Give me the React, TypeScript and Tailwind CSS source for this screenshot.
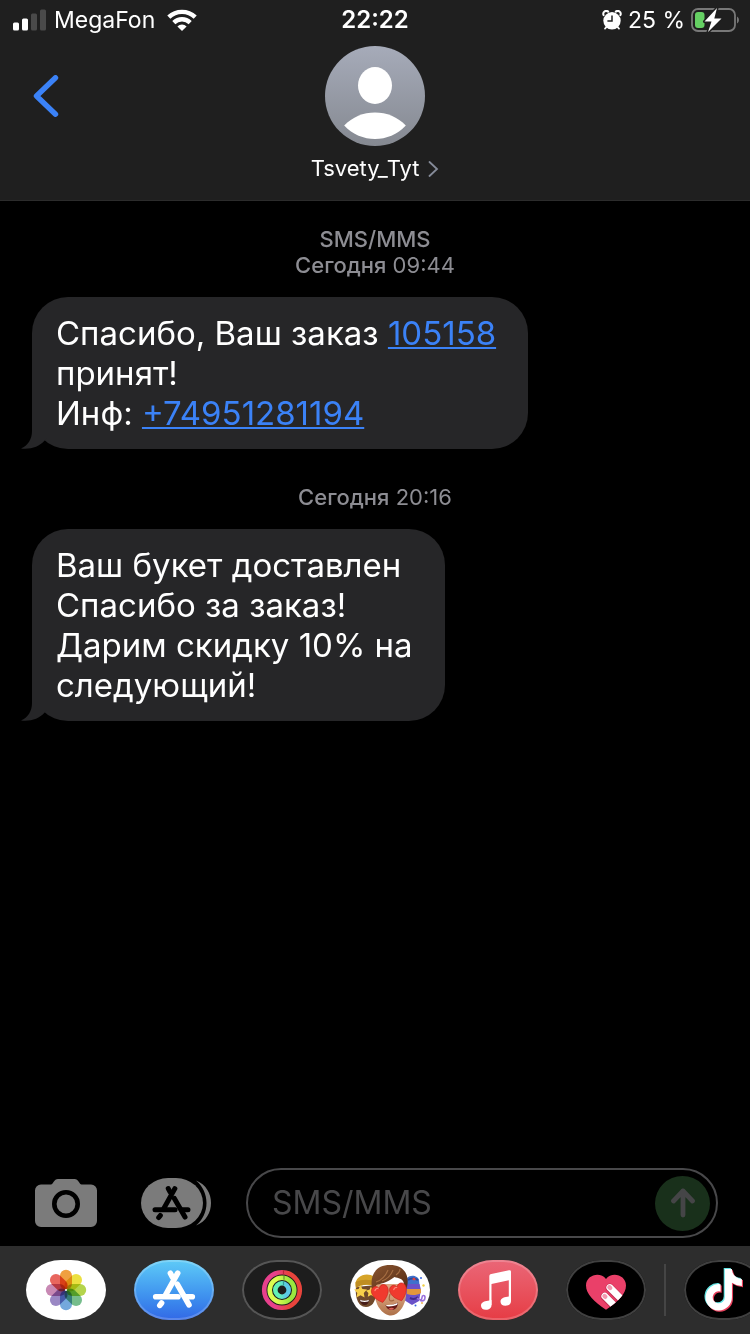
import React from 'react';

interface Message {
  id: number;
  service?: string;
  day: string;
  time: string;
  lines: React.ReactNode[];
}

const messages: Message[] = [
  {
    id: 1,
    service: 'SMS/MMS',
    day: 'Сегодня',
    time: '09:44',
    lines: [
      <>
        Спасибо, Ваш заказ <TextLink href="#order">105158</TextLink>
      </>,
      'принят!',
      <>
        Инф: <TextLink href="tel:+74951281194">+74951281194</TextLink>
      </>,
    ],
  },
  {
    id: 2,
    day: 'Сегодня',
    time: '20:16',
    lines: ['Ваш букет доставлен', 'Спасибо за заказ!', 'Дарим скидку 10% на', 'следующий!'],
  },
];

function TextLink({ href, children }: { href: string; children: React.ReactNode }) {
  return (
    <a href={href} className="text-[#3b82f7] underline decoration-2 underline-offset-2">
      {children}
    </a>
  );
}

function StatusBar() {
  return (
    <div className="grid h-10 grid-cols-3 items-center px-3 text-[23px] leading-7">
      <div className="flex items-center gap-2">
        <svg width="34" height="22" viewBox="0 0 34 22" className="shrink-0">
          <rect x="1" y="13.5" width="6" height="8" rx="1.5" fill="#fff" />
          <rect x="10" y="9.5" width="6" height="12" rx="1.5" fill="#fff" />
          <rect x="19" y="4.5" width="6" height="17" rx="1.5" fill="#4a4a4a" />
          <rect x="28" y="0.5" width="6" height="21" rx="1.5" fill="#4a4a4a" />
        </svg>
        <span>MegaFon</span>
        <svg width="30" height="22" viewBox="0 0 30 22" fill="none" stroke="#fff" strokeWidth="4.4" className="ml-1 shrink-0">
          <path d="M1.8 8.2a19 19 0 0 1 26.4 0" />
          <path d="M6.8 13.6a11.8 11.8 0 0 1 16.4 0" />
          <path d="M15 22l-4.6-4.6a6.6 6.6 0 0 1 9.2 0z" fill="#fff" stroke="none" />
        </svg>
      </div>
      <div className="text-center text-2xl leading-7 font-semibold">22:22</div>
      <div className="flex items-center justify-end gap-1.5">
        <svg width="20" height="20" viewBox="0 0 20 20" className="shrink-0">
          <path d="M1.6 5.2A3 3 0 0 1 6.2 1.6M18.4 5.2a3 3 0 0 0-4.6-3.6" fill="none" stroke="#fff" strokeWidth="2" strokeLinecap="round" />
          <path d="M4.5 17l-1.5 1.6M15.5 17l1.5 1.6" stroke="#fff" strokeWidth="1.8" strokeLinecap="round" />
          <circle cx="10" cy="10.8" r="8.7" fill="#fff" />
          <path d="M10 5.4v5.6H5.4" fill="none" stroke="#1f1f1f" strokeWidth="1.5" />
        </svg>
        <span className="whitespace-nowrap">25 %</span>
        <svg width="48" height="24" viewBox="0 0 48 24" className="-mr-px shrink-0">
          <rect x="1" y="1" width="43" height="22" rx="6" fill="none" stroke="#787878" strokeWidth="1.8" />
          <path d="M46 8.5c2.6 1.6 2.6 5.4 0 7z" fill="#787878" />
          <rect x="4" y="4" width="9.5" height="16" rx="3" fill="#65cf63" />
          <path
            d="M26 0L13.5 13.6h7L17 24l13.5-13.6h-7.2z"
            fill="#fff"
            stroke="#1f1f1f"
            strokeWidth="3"
            paintOrder="stroke"
            strokeLinejoin="round"
          />
        </svg>
      </div>
    </div>
  );
}

function Header() {
  return (
    <header className="border-b border-[#2c2c2c] bg-[#1f1f1f]">
      <StatusBar />
      <div className="grid grid-cols-3 items-start pt-1.5 pb-[18px]">
        <button aria-label="Назад" className="flex h-[100px] w-20 items-center pl-8">
          <svg width="28" height="42" viewBox="0 0 28 42" className="shrink-0">
            <path d="M23.5 2.8L4.5 21l19 18.2" fill="none" stroke="#3b82f7" strokeWidth="5.4" strokeLinecap="round" strokeLinejoin="round" />
          </svg>
        </button>
        <button className="flex flex-col items-center gap-2">
          <svg width="100" height="100" viewBox="0 0 100 100">
            <defs>
              <linearGradient id="avatar" x1="0" y1="0" x2="0" y2="1">
                <stop offset="0" stopColor="#a6abb9" />
                <stop offset="1" stopColor="#858991" />
              </linearGradient>
            </defs>
            <circle cx="50" cy="50" r="50" fill="url(#avatar)" />
            <ellipse cx="50" cy="39.5" rx="17" ry="18.5" fill="#fff" />
            <path d="M19.2 79.5C35 62 65 62 80.8 79.5C64 97.5 36 97.5 19.2 79.5z" fill="#fff" />
          </svg>
          <span className="flex items-center gap-2 text-[22px] leading-7">
            Tsvety_Tyt
            <svg width="12" height="18" viewBox="0 0 12 18" className="shrink-0">
              <path d="M2.5 3l7.5 7L2.5 17" fill="none" stroke="#858b99" strokeWidth="1.8" strokeLinecap="round" />
            </svg>
          </span>
        </button>
      </div>
    </header>
  );
}

function MessageGroup({ message }: { message: Message }) {
  return (
    <section>
      <div className="mb-[19px] text-center text-[22px] leading-[26px] text-[#8d8d93]">
        {message.service && <p className="font-medium">{message.service}</p>}
        <p>
          <span className="font-medium">{message.day}</span> {message.time}
        </p>
      </div>
      <div className="relative ml-8 w-fit rounded-[36px] bg-[#262628] py-4 pr-8 pl-6 text-[33px] leading-10">
        <svg width="26" height="36" viewBox="0 0 26 36" className="absolute bottom-0 -left-[11px]">
          <path d="M11 0V18C11 26 7 32.5 0 35.6C10 36.6 18 34 23.7 27.6L26 25V0z" fill="#262628" />
        </svg>
        {message.lines.map((line, i) => (
          <p key={i} className="relative">
            {line}
          </p>
        ))}
      </div>
    </section>
  );
}

/* Three crossing sticks of the App Store mark, centred on 0,0 */
function StoreGlyph({ color }: { color: string }) {
  return (
    <g fill="none" stroke={color} strokeWidth="5.6" strokeLinecap="round" strokeLinejoin="round">
      <path d="M3.7-16L-8.5 6" />
      <path d="M-18.3 7.5H4" />
      <path d="M-3.6-16L-1.5-12" />
      <path d="M3.2-5L15 15.6" />
      <path d="M12 7.5h6.3" />
      <path d="M-12.4 13.8l-1.8 2.4" />
    </g>
  );
}

function Composer() {
  return (
    <form className="flex items-center pr-8 pb-2 pl-[35px]" onSubmit={(e) => e.preventDefault()}>
      <button type="button" aria-label="Камера" className="shrink-0">
        <svg width="62" height="48" viewBox="0 0 62 48">
          <path
            d="M6 5.5h10c2 0 3-5.5 7-5.5h16.5c4 0 5 5.5 7 5.5H56a6 6 0 0 1 6 6V42a6 6 0 0 1-6 6H6a6 6 0 0 1-6-6V11.5a6 6 0 0 1 6-6z"
            fill="#7b7b7b"
          />
          <circle cx="31" cy="25" r="11.7" fill="none" stroke="#000" strokeWidth="4.6" />
        </svg>
      </button>
      <button type="button" aria-label="Приложения" className="ml-11 shrink-0">
        <svg width="70" height="50" viewBox="0 0 70 50">
          <path d="M55 2.5C75 10 75 40 55 47.5C69 36 69 14 55 2.5z" fill="#7b7b7b" />
          <rect width="62" height="50" rx="27" ry="25" fill="#7b7b7b" />
          <g transform="translate(30.5 25) scale(0.9)">
            <StoreGlyph color="#000" />
          </g>
        </svg>
      </button>
      <div className="ml-[35px] flex h-[70px] min-w-0 flex-1 items-center rounded-full border-2 border-[#48484a] pr-1.5 pl-6">
        <input
          type="text"
          aria-label="Сообщение"
          placeholder="SMS/MMS"
          className="min-w-0 flex-1 bg-transparent text-[32px] leading-10 text-white outline-none placeholder:text-[#48484a]"
        />
        <button type="submit" aria-label="Отправить" className="flex size-[55px] shrink-0 items-center justify-center rounded-full bg-[#19301b]">
          <svg width="26" height="30" viewBox="0 0 26 30">
            <path d="M13 3v24M3.5 13L13 3l9.5 10" fill="none" stroke="#454547" strokeWidth="4.8" strokeLinecap="round" strokeLinejoin="round" />
          </svg>
        </button>
      </div>
    </form>
  );
}

const petals = ['#f0a040', '#ece040', '#b4d44c', '#76bd8c', '#74a8dc', '#9a88c4', '#c889b4', '#e8665e'];

function PhotosIcon() {
  return (
    <g className="isolate">
      {petals.map((color, i) => (
        <rect
          key={color}
          x="34"
          y="9.8"
          width="12"
          height="20"
          rx="6"
          fill={color}
          transform={`rotate(${i * 45} 40 30)`}
          className="mix-blend-multiply"
        />
      ))}
      <circle cx="40" cy="30" r="1" fill="#fff" />
    </g>
  );
}

function ActivityIcon() {
  return (
    <g fill="none" strokeWidth="4.6">
      <defs>
        <linearGradient id="move">
          <stop offset="0.3" stopColor="#e8408c" />
          <stop offset="0.7" stopColor="#e8443c" />
        </linearGradient>
        <linearGradient id="exercise">
          <stop offset="0.3" stopColor="#dcfb50" />
          <stop offset="0.8" stopColor="#9be83f" />
        </linearGradient>
        <linearGradient id="stand">
          <stop offset="0.3" stopColor="#62f0b8" />
          <stop offset="0.8" stopColor="#5cc8e6" />
        </linearGradient>
      </defs>
      <circle cx="40" cy="30" r="17.8" stroke="url(#move)" />
      <circle cx="40" cy="30" r="12.3" stroke="url(#exercise)" />
      <circle cx="40" cy="30" r="6.7" stroke="url(#stand)" />
      <path d="M41.5 10.2v4.3" stroke="#b8243c" strokeWidth="1.2" />
      <path d="M42 15.7v4" stroke="#6fa030" strokeWidth="1.4" />
      <path d="M41.5 21.3v4" stroke="#2f9f90" strokeWidth="1.2" />
    </g>
  );
}

function Heart({ x, y, angle }: { x: number; y: number; angle: number }) {
  return (
    <path
      d="M0 8C-9 2-9-6-4-7C-1.5-7.5 0-5 0-4C0-5 1.5-7.5 4-7C9-6 9 2 0 8z"
      transform={`translate(${x} ${y}) rotate(${angle}) scale(1.15)`}
      fill="#f03a2e"
      stroke="#c4231c"
      strokeWidth="0.5"
    />
  );
}

function MemojiIcon() {
  return (
    <g>
      <defs>
        <linearGradient id="skin" x1="0" y1="0" x2="0" y2="1">
          <stop offset="0.3" stopColor="#dba680" />
          <stop offset="1" stopColor="#ad7048" />
        </linearGradient>
        <linearGradient id="hair" x1="0" y1="0" x2="1" y2="1">
          <stop offset="0" stopColor="#8a5530" />
          <stop offset="1" stopColor="#532b14" />
        </linearGradient>
      </defs>
      {/* left face in a yellow beanie */}
      <path d="M6 27c-1 8 1 20 10 20 6 0 9-5 10-12V25z" fill="#70492b" />
      <path d="M5.5 26C4 12 27 10 27 24l-1 3C20 24 12 24 6 28z" fill="#d6a429" />
      <path d="M5.5 22C12 19 20 19 27 22v3.5C20 24 12 24 6 28z" fill="#bf8d22" />
      <path d="M9.5 39.5c4 2 7.5 1.5 10 0-.5 3.5-2.5 5.5-4.5 5.5-2.5 0-5-2-5.5-5.5z" fill="#451c18" />
      <path d="M10 39.8c3 1.3 6.5 1.2 9 0l-.7 1.6c-2.6.7-5 .6-7.6 0z" fill="#fff" />
      <path d="M10.5 25l1.9 4 4.6.6-3.2 3.3.8 4.6-4.1-2.2-4 2.2.8-4.6-3.2-3.3 4.5-.6z" fill="#f8cf4a" />
      <path d="M21 26.500l1.500 3.300 3.700.6-2.600 2.600.7 3.700-3.300-1.800-3.200 1.800.6-3.700-2.500-2.600 3.600-.6z" fill="#f8cf4a" />
      {/* right face in a party hat */}
      <path d="M57 18c4-4 11-2 12 2l1 10H57z" fill="#3f70cc" />
      <path d="M58 20c3-2 7-1.5 10 0" fill="none" stroke="#27499c" strokeWidth="2" />
      <path d="M62 19l2-1.5 2 1.8-2 1.2z" fill="#e8413a" />
      <path d="M55 24h14.5l1.5 6-2 11-7 4-8-5z" fill="#6a51c8" />
      <path d="M57 29h14v4c-4 2.5-10 2.5-14 1z" fill="#e2963a" />
      <path d="M60 38c3 1.5 6 1 8-1" fill="none" stroke="#41298c" strokeWidth="2" />
      <path d="M67 38c3 3 5 2 5-.5s3-3 3 0-2 4-5 3" fill="none" stroke="#9a70dc" strokeWidth="1.6" />
      <circle cx="71" cy="18" r="1" fill="#3565e4" />
      <circle cx="73.5" cy="25.5" r="1.2" fill="#efcf44" />
      <circle cx="65.5" cy="45.5" r="1" fill="#3565e4" />
      <circle cx="72" cy="43" r=".9" fill="#efaf44" />
      {/* front face with heart eyes */}
      <path d="M25 24c-2 10 1 20 5 25 3 4 7 6.500 11 6.500s8-3 11-7.500c4-6 5-15 4-24z" fill="url(#skin)" />
      <path d="M22.5 31C19 16 25 5 40 5c13 0 20 9 17 22l-1.5 4-2-9c-1-3-5-4-9-5-8 6-15 7-18 8z" fill="url(#hair)" />
      <path d="M26 22c6-2 10-7 12-12M32 21c6-2 9-6 11-11M46 15c3-2 4-4 4-6" fill="none" stroke="#a56d42" strokeWidth="1.1" />
      <path d="M40 34c-1 4-1.5 5.500 0 6.500 1.500.8 3 .4 4-.5" fill="none" stroke="#a46640" strokeWidth="1.2" />
      <path d="M35.5 45c4.5.3 9-.6 12.500-2.500 0 4.500-2.500 7.500-6.500 7.500-3 0-5-1.500-6-5z" fill="#651c18" />
      <path d="M36 45c4.500.3 8.500-.6 11.700-2.200l-.6 2c-3 1.400-7 1.800-10.400 1.500z" fill="#fff" />
      <path d="M38.5 48.800c1.800-1.200 4.200-1.200 5.500-.4-1.200 1.700-4 2-5.500.4z" fill="#dd6258" />
      <Heart x={30.5} y={33.5} angle={-14} />
      <Heart x={48.8} y={32} angle={-18} />
      <path d="M25 30.5c.5-1.800 2-2.300 3-2M43.800 29.500c.5-1.800 2-2.300 3-2" fill="none" stroke="#ff8a7c" strokeWidth="1.3" strokeLinecap="round" />
    </g>
  );
}

function MusicIcon() {
  return (
    <g fill="#fff">
      <path d="M31.3 16.5c0-1.5.7-2.2 2-2.5L51 10.3c1.3-.3 2 .2 2 1.5V41h-2.200V20.200L33.500 24v21h-2.200z" />
      <path d="M33.5 40v5.3c0 2.700-2.200 4.500-5.600 4.500-3 0-4.900-1.800-4.900-4.100 0-4 4.600-4.700 8.300-5.200z" />
      <path d="M53 36v5.300c0 2.700-2.200 4.500-5.600 4.500-3 0-4.900-1.800-4.900-4.100 0-4 4.600-4.700 8.300-5.200z" />
    </g>
  );
}

function TouchIcon() {
  const heart = 'M40 49.8C28 41.5 20 34 20 25.5C20 15 34 11 40 19C46 11 60 15 60 25.5C60 34 52 41.5 40 49.8z';
  return (
    <g>
      <clipPath id="touch-heart">
        <path d={heart} />
      </clipPath>
      <path d={heart} fill="#ea4069" />
      <g clipPath="url(#touch-heart)" strokeLinecap="round">
        <path d="M43.8 27.8L59 43M38.8 36.5L54 51.7" stroke="#c22c50" strokeWidth="8.2" />
        <path d="M43.8 27.5L59 42.7M38.8 36.2L54 51.4" stroke="#fff" strokeWidth="6.8" />
        <path d="M43.4 27.2l.8.8M38.5 36l.8.8" stroke="#f29ab0" strokeWidth="4.4" />
      </g>
    </g>
  );
}

function TikTokIcon() {
  const note =
    'M448,209.91a210.06,210.06,0,0,1-122.77-39.25V349.38A162.55,162.55,0,1,1,185,188.31V278.2a74.62,74.62,0,1,0,52.23,71.18V0l88,0a121.18,121.18,0,0,0,1.86,22.17h0A122.18,122.18,0,0,0,381,102.39a121.43,121.43,0,0,0,67,20.14Z';
  return (
    <g>
      <path d={note} fill="#64e4e4" transform="translate(20.5 8) scale(0.081)" />
      <path d={note} fill="#e8405c" transform="translate(22.7 10.2) scale(0.081)" />
      <path d={note} fill="#fff" transform="translate(21.6 9) scale(0.081)" />
    </g>
  );
}

const apps = [
  { name: 'Фото', style: 'bg-white', icon: <PhotosIcon /> },
  {
    name: 'App Store',
    style: 'bg-linear-to-b from-[#5fcbf7] to-[#3268e6] inset-ring-2 inset-ring-white/20',
    icon: (
      <g transform="translate(40 29.2)">
        <StoreGlyph color="#fff" />
      </g>
    ),
  },
  { name: 'Активность', style: 'bg-[#1d1d1d] inset-ring-2 inset-ring-[#555555]', icon: <ActivityIcon /> },
  { name: 'Memoji', style: 'bg-white', icon: <MemojiIcon /> },
  { name: 'Музыка', style: 'bg-linear-to-b from-[#ea6677] to-[#e63b44] inset-ring-2 inset-ring-white/20', icon: <MusicIcon /> },
  { name: 'Digital Touch', style: 'bg-black inset-ring-2 inset-ring-[#404040]', icon: <TouchIcon /> },
];

function AppPill({ name, style, icon }: { name: string; style: string; icon: React.ReactNode }) {
  return (
    <button aria-label={name} className={`h-[60px] w-20 shrink-0 overflow-hidden rounded-[35px/30px] ${style}`}>
      <svg width="80" height="60" viewBox="0 0 80 60">
        {icon}
      </svg>
    </button>
  );
}

function AppDrawer() {
  return (
    <nav className="flex items-center overflow-hidden bg-[#2d2d2d] py-3.5 pl-[26px]">
      <div className="flex shrink-0 gap-7">
        {apps.map((app) => (
          <AppPill key={app.name} {...app} />
        ))}
      </div>
      <div className="mx-[18px] h-[52px] w-0.5 shrink-0 bg-[#454545]" />
      <AppPill name="TikTok" style="bg-black inset-ring-2 inset-ring-[#404040]" icon={<TikTokIcon />} />
    </nav>
  );
}

function App() {
  return (
    <div className="flex min-h-screen flex-col bg-black font-['Inter','Noto_Sans',sans-serif] text-white">
      <Header />
      <main className="flex flex-1 flex-col gap-[35px] pt-[25px]">
        {messages.map((message) => (
          <MessageGroup key={message.id} message={message} />
        ))}
      </main>
      <Composer />
      <AppDrawer />
    </div>
  );
}

export default App;
